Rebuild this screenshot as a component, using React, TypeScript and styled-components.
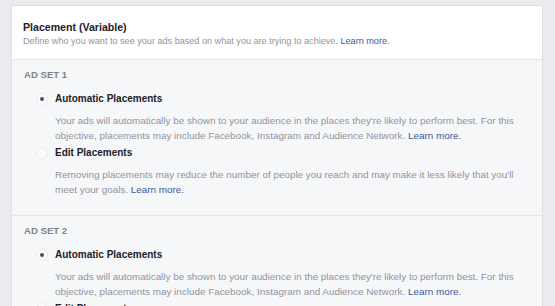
import React from "react";
import styled, { createGlobalStyle } from "styled-components";

const Global = createGlobalStyle`
  html, body { margin: 0; padding: 0; background: #e9ebee; }
  body { font-family: "Liberation Sans", Arial, Helvetica, sans-serif; -webkit-font-smoothing: antialiased; }
`;

const Page = styled.div`
  padding: 5px 12px 0 11px;
  height: 306px;
  box-sizing: border-box;
  overflow: hidden;
`;

const Card = styled.div`
  border: 1px solid #dddfe2;
  border-bottom: none;
  background: #f6f7f9;
`;

const Header = styled.div`
  background: #ffffff;
  padding: 14px 11px 10px;
  border-bottom: 1px solid #e5e6e9;
`;

const Title = styled.div`
  font-size: 10.6px;
  line-height: 14px;
  font-weight: bold;
  color: #1d2129;
`;

const Sub = styled.div`
  font-size: 9.1px;
  line-height: 15px;
  color: #90949c;
`;

const Link = styled.a`
  color: #365899;
  text-decoration: none;
`;

const Section = styled.div<{ $last?: boolean }>`
  padding: 8px 12px 18px;
  border-bottom: ${(p) => (p.$last ? "none" : "1px solid #e5e6e9")};
`;

const SetLabel = styled.div`
  font-size: 9.6px;
  line-height: 14px;
  font-weight: bold;
  color: #7f8389;
  text-transform: uppercase;
  margin-bottom: 9px;
`;

const Option = styled.div`
  margin-left: 12px;
  & + & { margin-top: 2px; }
`;

const OptionRow = styled.label`
  display: flex;
  align-items: center;
  gap: 7px;
  height: 16px;
`;

const Radio = styled.span<{ $checked?: boolean }>`
  width: 12px;
  height: 12px;
  border-radius: 50%;
  box-sizing: border-box;
  border: 1px solid #e9ebee;
  background: #fafbfc;
  display: flex;
  align-items: center;
  justify-content: center;
  flex-shrink: 0;
  &::after {
    content: "";
    width: 4px;
    height: 4px;
    border-radius: 50%;
    background: #4b4f56;
    display: ${(p) => (p.$checked ? "block" : "none")};
  }
`;

const OptionTitle = styled.span`
  font-size: 10px;
  line-height: 16px;
  font-weight: bold;
  color: #1d2129;
`;

const OptionDesc = styled.div`
  margin: 6px 0 0 19px;
  font-size: 9.9px;
  line-height: 15px;
  color: #90949c;
  white-space: nowrap;
`;

type Opt = { title: string; lines: string[]; checked?: boolean };

const options: Opt[] = [
  {
    title: "Automatic Placements",
    checked: true,
    lines: [
      "Your ads will automatically be shown to your audience in the places they're likely to perform best. For this",
      "objective, placements may include Facebook, Instagram and Audience Network.",
    ],
  },
  {
    title: "Edit Placements",
    lines: [
      "Removing placements may reduce the number of people you reach and may make it less likely that you'll",
      "meet your goals.",
    ],
  },
];

const AdSet = ({ n, last }: { n: number; last?: boolean }) => (
  <Section $last={last}>
    <SetLabel>Ad Set {n}</SetLabel>
    {options.map((o) => (
      <Option key={o.title}>
        <OptionRow>
          <Radio $checked={o.checked} />
          <OptionTitle>{o.title}</OptionTitle>
        </OptionRow>
        <OptionDesc>
          {o.lines[0]}
          <br />
          {o.lines[1]} <Link href="#">Learn more.</Link>
        </OptionDesc>
      </Option>
    ))}
  </Section>
);

export default function App() {
  return (
    <>
      <Global />
      <Page>
        <Card>
          <Header>
            <Title>Placement (Variable)</Title>
            <Sub>
              Define who you want to see your ads based on what you are trying to achieve.{" "}
              <Link href="#">Learn more.</Link>
            </Sub>
          </Header>
          <AdSet n={1} />
          <AdSet n={2} last />
        </Card>
      </Page>
    </>
  );
}
